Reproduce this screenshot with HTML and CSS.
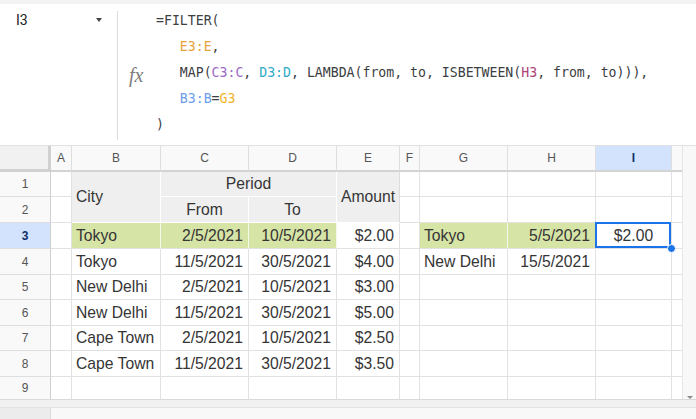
FILE: index.html
```html
<!DOCTYPE html>
<html>
<head>
<meta charset="utf-8">
<link rel="stylesheet" href="styles.css">
</head>
<body>
<div class="app">
  <div class="topband"></div>
  <div class="fbar">
    <div class="namebox"><span class="ref">I3</span><span class="caret"></span></div>
    <div class="sep"></div>
    <div class="fx">fx</div>
    <div class="formula">
      <div class="ln">=FILTER(</div>
      <div class="ln">   <span class="t-e">E3:E</span>,</div>
      <div class="ln">   MAP(<span class="t-c">C3:C</span>, <span class="t-d">D3:D</span>, LAMBDA(from, to, ISBETWEEN(<span class="t-h">H3</span>, from, to))),</div>
      <div class="ln">   <span class="t-b">B3:B</span>=<span class="t-g">G3</span></div>
      <div class="ln">)</div>
    </div>
  </div>
  <div class="sheet">
    <div class="grid">
      <div class="corner"></div>
      <div class="h">A</div><div class="h">B</div><div class="h">C</div><div class="h">D</div><div class="h">E</div><div class="h">F</div><div class="h">G</div><div class="h">H</div><div class="h hsel">I</div><div class="h j"></div>

      <div class="rh">1</div>
      <div class="c"></div>
      <div class="c g l span-r2">City</div>
      <div class="c g ctr span-c2">Period</div>
      <div class="c g ctr gE span-r2">Amount</div>
      <div class="c"></div><div class="c"></div><div class="c"></div><div class="c"></div><div class="c j"></div>

      <div class="rh">2</div>
      <div class="c"></div>
      <div class="c g ctr">From</div>
      <div class="c g ctr">To</div>
      <div class="c"></div><div class="c"></div><div class="c"></div><div class="c"></div><div class="c j"></div>

      <div class="rh rsel">3</div>
      <div class="c"></div>
      <div class="c gr l">Tokyo</div>
      <div class="c gr r">2/5/2021</div>
      <div class="c gr r">10/5/2021</div>
      <div class="c r">$2.00</div>
      <div class="c"></div>
      <div class="c gr l">Tokyo</div>
      <div class="c gr r">5/5/2021</div>
      <div class="c ctr sel">$2.00<span class="handle"></span></div>
      <div class="c j"></div>

      <div class="rh">4</div>
      <div class="c"></div>
      <div class="c l">Tokyo</div>
      <div class="c r">11/5/2021</div>
      <div class="c r">30/5/2021</div>
      <div class="c r">$4.00</div>
      <div class="c"></div>
      <div class="c l">New Delhi</div>
      <div class="c r">15/5/2021</div>
      <div class="c"></div>
      <div class="c j"></div>

      <div class="rh">5</div>
      <div class="c"></div>
      <div class="c l">New Delhi</div>
      <div class="c r">2/5/2021</div>
      <div class="c r">10/5/2021</div>
      <div class="c r">$3.00</div>
      <div class="c"></div><div class="c"></div><div class="c"></div><div class="c"></div><div class="c j"></div>

      <div class="rh">6</div>
      <div class="c"></div>
      <div class="c l">New Delhi</div>
      <div class="c r">11/5/2021</div>
      <div class="c r">30/5/2021</div>
      <div class="c r">$5.00</div>
      <div class="c"></div><div class="c"></div><div class="c"></div><div class="c"></div><div class="c j"></div>

      <div class="rh">7</div>
      <div class="c"></div>
      <div class="c l">Cape Town</div>
      <div class="c r">2/5/2021</div>
      <div class="c r">10/5/2021</div>
      <div class="c r">$2.50</div>
      <div class="c"></div><div class="c"></div><div class="c"></div><div class="c"></div><div class="c j"></div>

      <div class="rh">8</div>
      <div class="c"></div>
      <div class="c l">Cape Town</div>
      <div class="c r">11/5/2021</div>
      <div class="c r">30/5/2021</div>
      <div class="c r">$3.50</div>
      <div class="c"></div><div class="c"></div><div class="c"></div><div class="c"></div><div class="c j"></div>

      <div class="rh last">9</div>
      <div class="c last"></div><div class="c last"></div><div class="c last"></div><div class="c last"></div><div class="c last"></div><div class="c last"></div><div class="c last"></div><div class="c last"></div><div class="c last"></div><div class="c last j"></div>
    </div>
    <div class="vscroll"><span class="arrow"></span></div>
  </div>
  <div class="hscroll">
    <div class="track"></div>
    <div class="tabs"><div class="tabs-left"></div><div class="tabs-right"></div></div>
  </div>
</div>
</body>
</html>
```

FILE: styles.css
```css
* { box-sizing: border-box; }
html, body { margin: 0; padding: 0; background: #ffffff; }
.app { width: 696px; height: 419px; overflow: hidden; display: flex; flex-direction: column; }

.topband { height: 4px; background: #f3f3f3; flex: none; }

.fbar { height: 142px; flex: none; display: flex; border-bottom: 1px solid #e1e1e1; background: #fff; }
.namebox { width: 117px; flex: none; height: 32px; display: flex; align-items: center; justify-content: space-between; padding: 0 15px 0 16px; }
.ref { font-family: Roboto, "Liberation Sans", sans-serif; font-size: 14px; color: #202124; }
.caret { width: 0; height: 0; border-left: 3px solid transparent; border-right: 3px solid transparent; border-top: 4px solid #444; }
.sep { width: 1px; height: 129px; margin-top: 7px; background: #dadce0; flex: none; }
.fx { width: 38px; flex: none; padding-left: 11px; margin-top: 58px; height: 26px; line-height: 26px; font-family: "Liberation Serif", serif; font-style: italic; font-size: 20px; color: #7d7d7d; }
.formula { padding-top: 4px; font-family: "DejaVu Sans Mono", monospace; font-size: 13.2px; color: #3c4043; }
.ln { height: 26px; line-height: 26px; white-space: pre; }
.t-e { color: #e8a33c; }
.t-c { color: #9d69c6; }
.t-d { color: #33abc9; }
.t-h { color: #ad4378; }
.t-b { color: #6d9eeb; }
.t-g { color: #f2b329; }

.sheet { display: flex; flex: none; height: 253px; }
.grid {
  width: 682px; flex: none; display: grid;
  grid-template-columns: 51px 21px 89px 88px 88px 63px 20px 88px 88px 76px 10px;
  grid-template-rows: 26px 25px 26px 26px 26px 25px 26px 25px 26px 22px;
  font-family: "Liberation Sans", Arial, sans-serif;
}
.grid > div { min-width: 0; overflow: hidden; white-space: nowrap; }

.corner { background: #f1f1f1; border-right: 3px solid #d0d0d0; border-bottom: 3px solid #d0d0d0; }
.h { background: #f9f9f9; border-right: 1px solid #dedede; border-bottom: 2px solid #d3d3d3; display: flex; align-items: center; justify-content: center; font-size: 12px; color: #555; }
.hsel { background: #d3e3fd; color: #0b2f66; font-weight: bold; }
.rh { background: #f9f9f9; border-right: 1px solid #cfcfcf; border-bottom: 1px solid #dedede; display: flex; align-items: center; justify-content: center; font-size: 12px; color: #555; }
.rsel { background: #d3e3fd; color: #0b2f66; font-weight: bold; }

.c { border-right: 1px solid #e2e2e2; border-bottom: 1px solid #e2e2e2; display: flex; align-items: center; font-size: 15.7px; color: #353535; }
.c.j, .h.j { border-right: none; }
.last { border-bottom: none; }
.l { padding-left: 4px; }
.r { justify-content: flex-end; padding-right: 5px; }
.ctr { justify-content: center; }
.g { background: #efefef; border-right-color: #ffffff; border-bottom-color: #ffffff; }
.g.gE { border-right-color: #dcdcdc; }
.gr { background: #d6e4a6; border-right-color: #f4f8e8; }
.span-r2 { grid-row: span 2; }
.span-c2 { grid-column: span 2; }

.sel { position: relative; overflow: visible !important; }
.sel::after { content: ""; position: absolute; left: -1px; top: -1px; right: 0; bottom: 0; border: 2px solid #1a73e8; }
.handle { position: absolute; right: -5px; bottom: -5px; width: 9px; height: 9px; border-radius: 50%; background: #1a73e8; border: 1px solid #fff; z-index: 2; }

.vscroll { width: 14px; flex: none; background: #f8f8f8; border-left: 1px solid #e6e6e6; position: relative; }
.arrow { position: absolute; left: 4px; bottom: 0; width: 0; height: 0; border-left: 3px solid transparent; border-right: 3px solid transparent; border-top: 3px solid #8a8a8a; }

.hscroll { flex: none; height: 20px; border-top: 1px solid #dadada; display: flex; flex-direction: column; }
.track { height: 8px; background: #f1f1f1; border-bottom: 1px solid #e3e3e3; }
.tabs { flex: 1; display: flex; }
.tabs-left { width: 51px; background: #ececec; border-right: 1px solid #dcdcdc; }
.tabs-right { flex: 1; background: #f8f8f8; }
```
